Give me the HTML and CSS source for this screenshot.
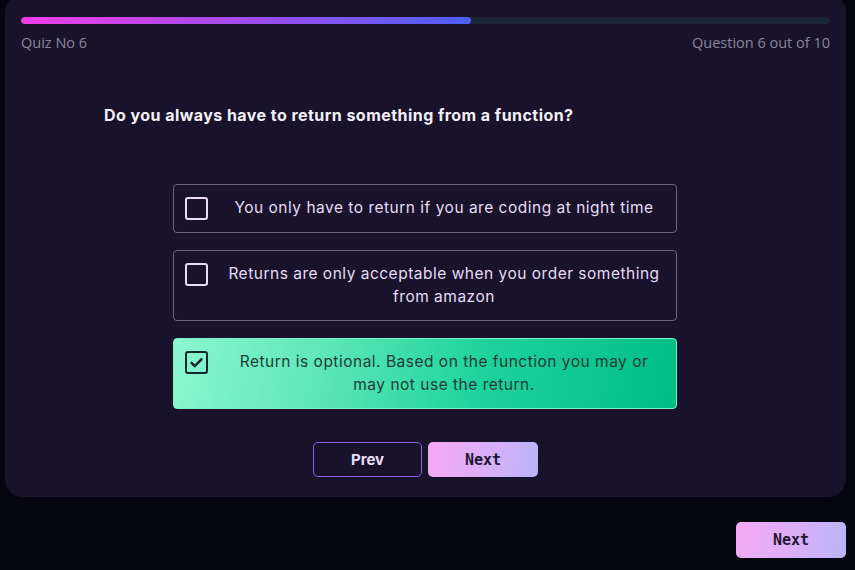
FILE: index.html
```html
<!DOCTYPE html>
<html lang="en">
<head>
<meta charset="utf-8">
<title>Quiz</title>
<link rel="stylesheet" href="styles.css">
</head>
<body>
<main class="card">
  <div class="progress"><div class="progress-fill" style="width:55.6%"></div></div>
  <div class="meta">
    <span>Quiz No 6</span>
    <span>Question 6 out of 10</span>
  </div>
  <h1 class="question">Do you always have to return something from a function?</h1>
  <div class="options">
    <div class="option">
      <span class="box"></span>
      <span class="option-text">You only have to return if you are coding at night time</span>
    </div>
    <div class="option">
      <span class="box"></span>
      <span class="option-text">Returns are only acceptable when you order something from amazon</span>
    </div>
    <div class="option option-selected">
      <span class="box box-checked">
        <svg viewBox="0 0 24 24" width="17" height="17"><path d="M5 12.5l4.5 4.5L19 7.5" fill="none" stroke="#17262a" stroke-width="3.6" stroke-linecap="round" stroke-linejoin="round"/></svg>
      </span>
      <span class="option-text">Return is optional. Based on the function you may or may not use the return.</span>
    </div>
  </div>
  <div class="nav">
    <button class="btn btn-outline">Prev</button>
    <button class="btn btn-grad">Next</button>
  </div>
</main>
<div class="footer">
  <button class="btn btn-grad btn-footer">Next</button>
</div>
</body>
</html>
```
FILE: styles.css
```css
* { box-sizing: border-box; }
html, body { margin: 0; padding: 0; }
body {
  background: #05050f;
  font-family: Inter, "DejaVu Sans", sans-serif;
  width: 855px;
  height: 570px;
  overflow: hidden;
}
.card {
  margin: -6px 9px 0 5px;
  background: #18122b;
  border-radius: 18px;
  padding: 23px 16px 20px;
}
.progress {
  height: 7px;
  background: #192534;
  border-radius: 4px;
  overflow: hidden;
}
.progress-fill {
  height: 100%;
  border-radius: 4px;
  background: linear-gradient(90deg, #ef3de6 0%, #a04cee 50%, #4d60f6 100%);
}
.meta {
  margin-top: 9px;
  display: flex;
  justify-content: space-between;
  font-family: "Open Sans", sans-serif;
  font-size: 14.5px;
  line-height: 20px;
  color: #8b8798;
}
.question {
  margin: 50px 0 0 83px;
  font-size: 16px;
  line-height: 24px;
  font-weight: 700;
  letter-spacing: 0.45px;
  color: #f4f0fa;
}
.options {
  width: 504px;
  margin: 57px 0 0 152px;
  display: flex;
  flex-direction: column;
  gap: 17px;
}
.option {
  display: flex;
  align-items: flex-start;
  gap: 16px;
  padding: 12px 12px 12px 11px;
  border: 1px solid #6a6480;
  border-radius: 4px;
}
.box {
  flex: none;
  width: 23px;
  height: 23px;
  border: 2px solid #ead9fa;
  border-radius: 3px;
  display: flex;
  align-items: center;
  justify-content: center;
}
.option-text {
  flex: 1;
  text-align: center;
  font-size: 15.5px;
  line-height: 22.5px;
  letter-spacing: 0.5px;
  color: #e7dcf6;
}
.option-selected {
  border-color: #7ff2c9;
  background: linear-gradient(100deg, #8cf7d1 0%, #5de6b8 30%, #1fd49c 60%, #00bd84 100%);
}
.option-selected .option-text {
  color: #1e3b35;
}
.box-checked {
  border: 2.5px solid #17262a;
}
.nav {
  margin-top: 33px;
  display: flex;
  justify-content: center;
  gap: 6px;
}
.btn {
  width: 110px;
  height: 35px;
  border-radius: 5px;
  font-size: 15px;
  font-weight: 700;
  cursor: pointer;
}
.btn-outline {
  background: transparent;
  border: 1px solid #8d5cf0;
  color: #ecdff8;
  font-family: Inter, sans-serif;
  width: 109px;
}
.btn-grad {
  border: none;
  background: linear-gradient(100deg, #f6a9f6 0%, #dcaef7 50%, #b9b4f8 100%);
  color: #1c1730;
  font-family: "DejaVu Sans Mono", monospace;
}
.footer {
  display: flex;
  justify-content: flex-end;
  margin: 25px 9px 0 0;
}
.btn-footer {
  height: 36px;
}
```
